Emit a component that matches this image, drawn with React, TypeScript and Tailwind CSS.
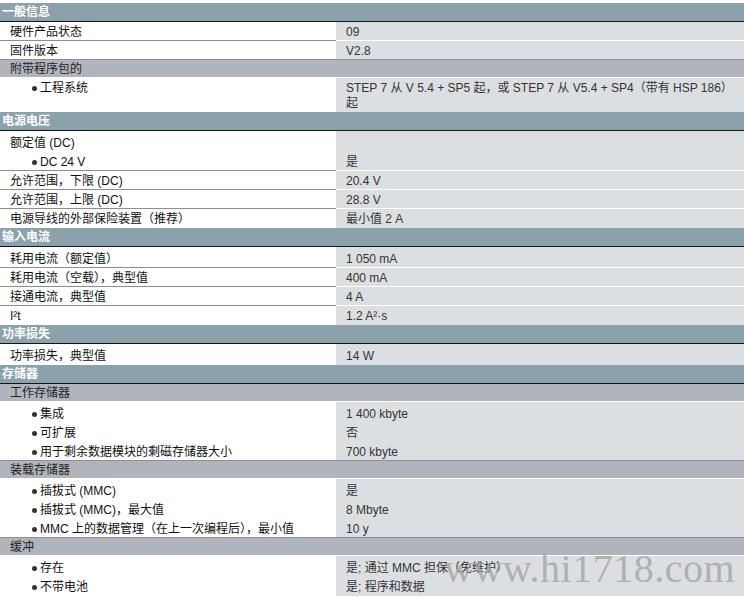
import React from "react";

type Line = { l: string; r?: string; b?: boolean };
type Item =
  | { k: "row"; lines: Line[]; pad?: boolean }
  | { k: "sub"; l: string }
  | { k: "wrap"; l: string; b?: boolean; r: string[] };

const SECTIONS: { title: string; items: Item[] }[] = [
  {
    title: "一般信息",
    items: [
      { k: "row", lines: [{ l: "硬件产品状态", r: "09" }] },
      { k: "row", lines: [{ l: "固件版本", r: "V2.8" }] },
      { k: "sub", l: "附带程序包的" },
      {
        k: "wrap",
        l: "工程系统",
        b: true,
        r: ["STEP 7 从 V 5.4 + SP5 起，或 STEP 7 从 V5.4 + SP4（带有 HSP 186）", "起"],
      },
    ],
  },
  {
    title: "电源电压",
    items: [
      { k: "row", pad: true, lines: [{ l: "额定值 (DC)" }, { l: "DC 24 V", b: true, r: "是" }] },
      { k: "row", lines: [{ l: "允许范围，下限 (DC)", r: "20.4 V" }] },
      { k: "row", lines: [{ l: "允许范围，上限 (DC)", r: "28.8 V" }] },
      { k: "row", lines: [{ l: "电源导线的外部保险装置（推荐）", r: "最小值 2 A" }] },
    ],
  },
  {
    title: "输入电流",
    items: [
      { k: "row", pad: true, lines: [{ l: "耗用电流（额定值）", r: "1 050 mA" }] },
      { k: "row", lines: [{ l: "耗用电流（空载），典型值", r: "400 mA" }] },
      { k: "row", lines: [{ l: "接通电流，典型值", r: "4 A" }] },
      { k: "row", lines: [{ l: "I²t", r: "1.2 A²·s" }] },
    ],
  },
  {
    title: "功率损失",
    items: [{ k: "row", pad: true, lines: [{ l: "功率损失，典型值", r: "14 W" }] }],
  },
  {
    title: "存储器",
    items: [
      { k: "sub", l: "工作存储器" },
      {
        k: "row",
        pad: true,
        lines: [
          { l: "集成", b: true, r: "1 400 kbyte" },
          { l: "可扩展", b: true, r: "否" },
          { l: "用于剩余数据模块的剩磁存储器大小", b: true, r: "700 kbyte" },
        ],
      },
      { k: "sub", l: "装载存储器" },
      {
        k: "row",
        pad: true,
        lines: [
          { l: "插拔式 (MMC)", b: true, r: "是" },
          { l: "插拔式 (MMC)，最大值", b: true, r: "8 Mbyte" },
          { l: "MMC 上的数据管理（在上一次编程后），最小值", b: true, r: "10 y" },
        ],
      },
      { k: "sub", l: "缓冲" },
      {
        k: "row",
        pad: true,
        lines: [
          { l: "存在", b: true, r: "是; 通过 MMC 担保（免维护）" },
          { l: "不带电池", b: true, r: "是; 程序和数据" },
        ],
      },
    ],
  },
];

type Sep = "row" | "sub" | "none";

const SEP_LEFT: Record<Sep, string> = {
  row: "border-[#8e8e8e]",
  sub: "border-[#8c9095]",
  none: "border-white",
};
const SEP_RIGHT: Record<Sep, string> = {
  row: "border-white",
  sub: "border-[#8c9095]",
  none: "border-[#dcdfe2]",
};

function LeftText({ line }: { line: Line }) {
  if (line.b) {
    return (
      <div className="flex items-center pl-[32px]">
        <span className="w-[5px] h-[5px] rounded-full bg-[#333] mr-[3px]" />
        <span>{line.l}</span>
      </div>
    );
  }
  return <div className="pl-[10px]">{line.l}</div>;
}

function Row({ item, sep }: { item: Extract<Item, { k: "row" }>; sep: Sep }) {
  const n = item.lines.length;
  const pad = item.pad ? "pt-[2px]" : "";
  return (
    <div className="flex">
      <div className={`w-[336px] shrink-0 bg-white border-b ${SEP_LEFT[sep]} ${pad}`}>
        {item.lines.map((ln, i) => (
          <div key={i} className={i === n - 1 ? "h-[18px] leading-[20px]" : "h-[19px] leading-[20px]"}>
            <LeftText line={ln} />
          </div>
        ))}
      </div>
      <div className={`flex-1 bg-[#dcdfe2] border-b text-[#333] pl-[10px] ${SEP_RIGHT[sep]} ${pad}`}>
        {item.lines.map((ln, i) => (
          <div key={i} className={i === n - 1 ? "h-[18px] leading-[20px]" : "h-[19px] leading-[20px]"}>
            {ln.r ?? ""}
          </div>
        ))}
      </div>
    </div>
  );
}

function WrapRow({ item, sep }: { item: Extract<Item, { k: "wrap" }>; sep: Sep }) {
  return (
    <div className="flex h-[34px]">
      <div className={`w-[336px] shrink-0 bg-white border-b ${SEP_LEFT[sep]}`}>
        <div className="h-[19px] leading-[20px]">
          <LeftText line={{ l: item.l, b: item.b }} />
        </div>
      </div>
      <div className={`flex-1 bg-[#dcdfe2] border-b text-[#333] pl-[10px] pt-[3px] leading-[15px] ${SEP_RIGHT[sep]}`}>
        {item.r.map((t, i) => (
          <div key={i} className="whitespace-nowrap">
            {t}
          </div>
        ))}
      </div>
    </div>
  );
}

function Section({ title, items }: { title: string; items: Item[] }) {
  return (
    <div>
      <div className="h-[19px] bg-[#8ba1ac] border-b border-[#151515] pl-[2px] text-white font-bold leading-[19px]">
        {title}
      </div>
      {items.map((it, i) => {
        const next = items[i + 1];
        const sep: Sep = !next ? "none" : next.k === "sub" ? "sub" : "row";
        if (it.k === "sub") {
          return (
            <div key={i} className="h-[18px] bg-[#b0b4bc] border-b border-white pl-[10px] leading-[18px] text-[#222]">
              {it.l}
            </div>
          );
        }
        if (it.k === "wrap") return <WrapRow key={i} item={it} sep={sep} />;
        return <Row key={i} item={it} sep={sep} />;
      })}
    </div>
  );
}

export default function App() {
  return (
    <div className="relative w-[744px] h-[598px] overflow-hidden bg-white pt-[3px] text-[12px] text-[#111] font-['Liberation_Sans','Noto_Sans_CJK_SC',sans-serif]">
      {SECTIONS.map((s) => (
        <Section key={s.title} title={s.title} items={s.items} />
      ))}
      {/* watermark */}
      <div className="absolute left-[444px] top-[549px] text-[40px] leading-none tracking-[0.5px] text-[#a2a4a7]/80 font-['Liberation_Serif',serif] pointer-events-none select-none">
        www.hi1718.com
      </div>
    </div>
  );
}
